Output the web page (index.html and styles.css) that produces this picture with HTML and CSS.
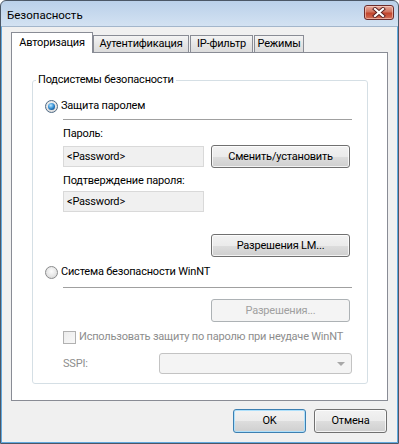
FILE: index.html
```html
<!DOCTYPE html>
<html lang="ru">
<head>
<meta charset="utf-8">
<title>Безопасность</title>
<link rel="stylesheet" href="styles.css">
</head>
<body>
<div class="window">
  <div class="titlebar">
    <span class="title">Безопасность</span>
    <span class="close">
      <svg width="14" height="11" viewBox="0 0 14 11">
        <path d="M3 2 L11 9 M11 2 L3 9" stroke="#5a2020" stroke-width="4" stroke-linecap="square" fill="none"/>
        <path d="M3 2 L11 9 M11 2 L3 9" stroke="#ffffff" stroke-width="2.2" stroke-linecap="square" fill="none"/>
      </svg>
    </span>
  </div>
  <div class="client">
    <div class="tabs">
      <div class="tab active t1">Авторизация</div>
      <div class="tab t2">Аутентификация</div>
      <div class="tab t3">IP-фильтр</div>
      <div class="tab t4">Режимы</div>
    </div>
    <div class="panel">
      <fieldset class="group">
        <legend>Подсистемы безопасности</legend>
        <div class="group-body">
          <div class="option opt1"><span class="radio checked"></span><span>Защита паролем</span></div>
          <div class="sep sep1"></div>
          <div class="label lab1">Пароль:</div>
          <div class="field-row">
            <div class="field">&lt;Password&gt;</div>
            <div class="btn">Сменить/установить</div>
          </div>
          <div class="label lab2">Подтверждение пароля:</div>
          <div class="field-row row2">
            <div class="field">&lt;Password&gt;</div>
          </div>
          <div class="btn-row lm"><div class="btn">Разрешения LM...</div></div>
          <div class="option opt2"><span class="radio"></span><span>Система безопасности WinNT</span></div>
          <div class="sep sep2"></div>
          <div class="btn-row perm"><div class="btn disabled">Разрешения...</div></div>
          <div class="check-row"><span class="checkbox"></span><span>Использовать защиту по паролю при неудаче WinNT</span></div>
          <div class="sspi-row">
            <span class="sspi-label">SSPI:</span>
            <div class="combo"><span class="arrow"></span></div>
          </div>
        </div>
      </fieldset>
    </div>
    <div class="footer">
      <div class="btn dlg default">OK</div>
      <div class="btn dlg">Отмена</div>
    </div>
  </div>
</div>
</body>
</html>
```

FILE: styles.css
```css
* { box-sizing: border-box; }

html, body {
  margin: 0;
  padding: 0;
  background: #ffffff;
}

body {
  font-family: Roboto, "Noto Sans", sans-serif;
  font-size: 11px;
  letter-spacing: -0.2px;
  line-height: 16px;
  color: #000;
}

.window {
  width: 399px;
  height: 444px;
  border: 1px solid #4b5766;
  border-radius: 6px 6px 0 0;
  background: linear-gradient(#bad0e9, #d3e2f2 25px, #d3e2f2);
  display: flex;
  flex-direction: column;
  overflow: hidden;
}

.titlebar {
  height: 25px;
  flex: none;
  display: flex;
  align-items: flex-start;
  justify-content: space-between;
  padding: 0 4px 0 6px;
}

.title {
  margin-top: 6px;
  color: #000;
  font-size: 11.5px;
  letter-spacing: 0;
}

.close {
  margin-top: 4px;
  width: 30px;
  height: 15px;
  border: 1px solid #6b2c2c;
  border-radius: 3px;
  background: linear-gradient(#e9a99c, #d0745f 45%, #c2452d 55%, #d2705a);
  box-shadow: inset 0 0 0 1px rgba(255, 220, 210, 0.55);
  display: flex;
  align-items: center;
  justify-content: center;
}

.close svg { display: block; }

.client {
  flex: 1;
  background: #f0f0f0;
  border: 1px solid #62a9df;
  border-top-color: #a3b6cb;
  display: flex;
  flex-direction: column;
}

.tabs {
  display: flex;
  align-items: flex-end;
  height: 20px;
  margin: 5px 0 0 9px;
}

.tab {
  height: 17px;
  border: 1px solid #898c95;
  border-bottom: none;
  background: linear-gradient(#f4f4f4, #e6e6e6 50%, #dcdcdc);
  text-align: center;
  line-height: 16px;
  white-space: nowrap;
  margin-right: 1px;
}

.tab.active {
  height: 21px;
  margin-bottom: -1px;
  background: #ffffff;
  padding-top: 2px;
  position: relative;
  z-index: 1;
  margin-right: 0;
}

.t1 { width: 82px; }
.t2 { width: 96px; }
.t3 { width: 63px; }
.t4 { width: 50px; }

.panel {
  margin: 0 9px 0 9px;
  height: 349px;
  border: 1px solid #898c95;
  background: #ffffff;
  padding: 19px 19px 0 20px;
}

.group {
  margin: 0;
  padding: 0;
  border: 1px solid #d5dfe5;
  border-radius: 3px;
  min-width: 0;
}

.group legend {
  padding: 0 2px;
  margin-left: 3px;
  line-height: 16px;
}

.group-body {
  padding: 10px 15px 9px 12px;
  display: flex;
  flex-direction: column;
}

.option {
  display: flex;
  align-items: center;
  height: 16px;
  white-space: nowrap;
}

.opt2 { margin-top: 7px; }

.radio {
  width: 13px;
  height: 13px;
  border-radius: 50%;
  border: 1px solid #8a8b8c;
  background: radial-gradient(circle at 50% 40%, #fdfdfd, #e4e4e4 60%, #cfcfcf);
  margin-right: 3px;
  display: flex;
  align-items: center;
  justify-content: center;
  flex: none;
}

.radio.checked { border-color: #4f6a85; }

.radio.checked::after {
  content: "";
  width: 7px;
  height: 7px;
  border-radius: 50%;
  background: radial-gradient(circle at 40% 35%, #bfe8ff, #3a94d8 45%, #10508f 80%);
}

.sep {
  height: 1px;
  background: #a0a0a0;
  margin-left: 18px;
}

.sep1 { margin-top: 5px; }
.sep2 { margin-top: 7px; }

.label {
  margin-left: 18px;
  height: 16px;
}

.lab1 { margin-top: 6px; }
.lab2 { margin-top: 5px; }

.field-row {
  display: flex;
  align-items: center;
  margin: 3px 0 0 18px;
  height: 23px;
  gap: 7px;
}

.field-row.row2 {
  margin-top: 2px;
  height: 21px;
}

.field {
  width: 141px;
  height: 21px;
  border: 1px solid #d9d9d9;
  background: #f0f0f0;
  padding: 2px 0 0 3px;
  line-height: 16px;
}

.btn {
  width: 139px;
  height: 23px;
  border: 1px solid #707070;
  border-radius: 3px;
  background: linear-gradient(#f2f2f2, #ebebeb 50%, #dddddd 51%, #cfcfcf);
  box-shadow: inset 0 0 0 1px rgba(255, 255, 255, 0.75);
  display: flex;
  align-items: center;
  justify-content: center;
  white-space: nowrap;
}

.btn.disabled {
  border-color: #adb2b5;
  background: #f4f4f4;
  box-shadow: none;
  color: #a0a0a0;
}

.btn-row {
  display: flex;
  padding-left: 166px;
}

.lm { margin-top: 22px; }
.perm { margin-top: 11px; }

.check-row {
  display: flex;
  align-items: center;
  height: 16px;
  margin: 7px 0 0 18px;
  color: #8d8d8d;
  white-space: nowrap;
}

.checkbox {
  width: 13px;
  height: 13px;
  border: 1px solid #b1b1b1;
  background: linear-gradient(135deg, #ececec, #f8f8f8);
  margin-right: 3px;
  flex: none;
}

.sspi-row {
  display: flex;
  align-items: center;
  margin: 8px 0 0 18px;
  height: 21px;
}

.sspi-label {
  width: 96px;
  color: #8d8d8d;
}

.combo {
  width: 194px;
  height: 21px;
  border: 1px solid #c3c3c3;
  border-radius: 3px;
  background: #f4f4f4;
  display: flex;
  align-items: center;
  justify-content: flex-end;
  padding-right: 6px;
}

.arrow {
  width: 0;
  height: 0;
  border-left: 4px solid transparent;
  border-right: 4px solid transparent;
  border-top: 4px solid #a8a8a8;
}

.footer {
  display: flex;
  justify-content: flex-end;
  gap: 8px;
  padding: 8px 10px 0 0;
}

.btn.dlg {
  width: 73px;
  height: 24px;
}

.btn.default {
  border-color: #3c7fb1;
  box-shadow: inset 0 0 0 1px #aee0fb;
}
```
